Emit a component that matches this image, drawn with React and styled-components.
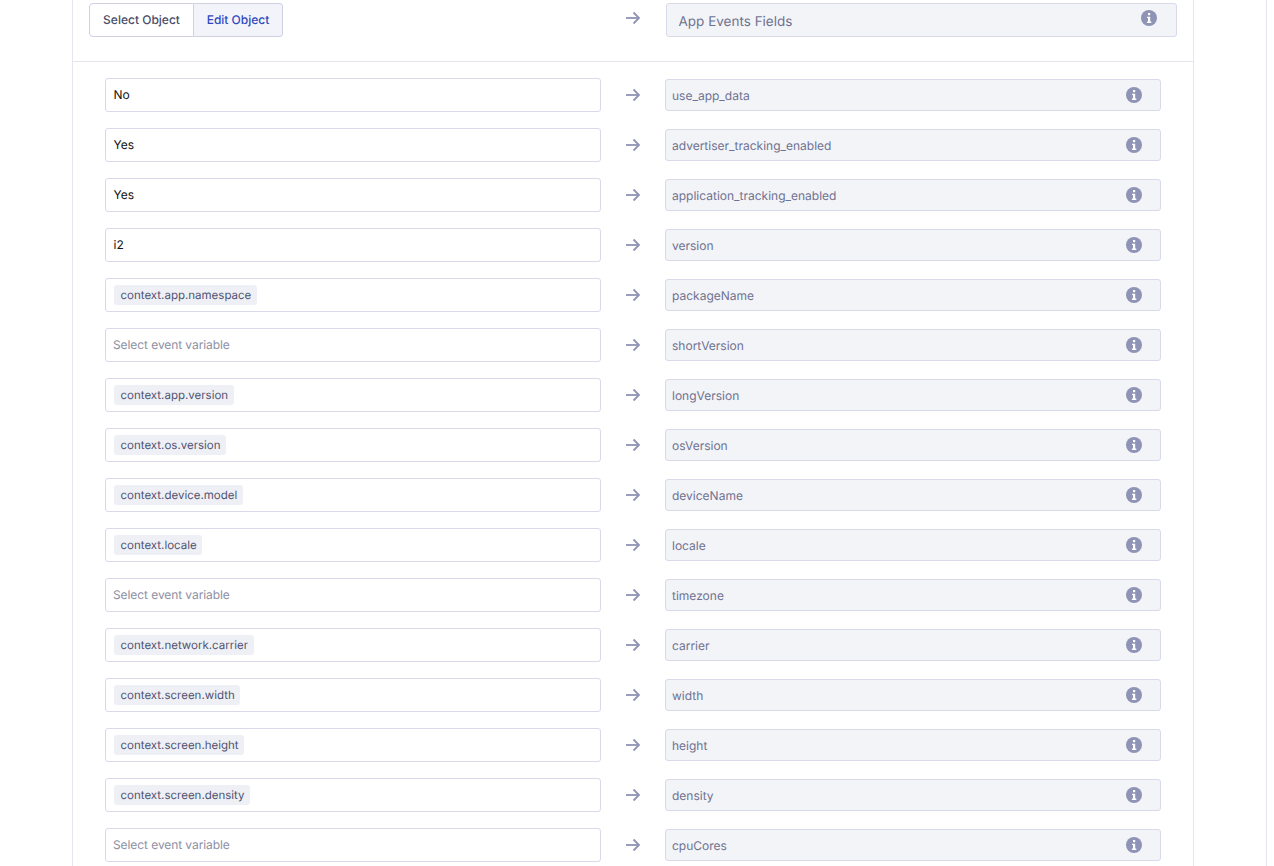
import React from "react";
import styled, { createGlobalStyle } from "styled-components";

const rows = [
  { text: "No", field: "use_app_data" },
  { text: "Yes", field: "advertiser_tracking_enabled" },
  { text: "Yes", field: "application_tracking_enabled" },
  { text: "i2", field: "version" },
  { tag: "context.app.namespace", field: "packageName" },
  { field: "shortVersion" },
  { tag: "context.app.version", field: "longVersion" },
  { tag: "context.os.version", field: "osVersion" },
  { tag: "context.device.model", field: "deviceName" },
  { tag: "context.locale", field: "locale" },
  { field: "timezone" },
  { tag: "context.network.carrier", field: "carrier" },
  { tag: "context.screen.width", field: "width" },
  { tag: "context.screen.height", field: "height" },
  { tag: "context.screen.density", field: "density" },
  { field: "cpuCores" },
];

const ArrowIcon = () => (
  <ArrowSvg viewBox="0 0 16 14" fill="none" stroke="#8f93b5" strokeWidth="1.8">
    <path d="M1 7h13" />
    <path d="M8.5 1.5L14 7l-5.500 5.500" />
  </ArrowSvg>
);

const InfoIcon = () => (
  <InfoSvg viewBox="0 0 16 16">
    <circle cx="8" cy="8" r="8" fill="#8f93b5" />
    <rect x="7" y="3" width="2.2" height="2.200" fill="#fff" />
    <path d="M6 6.700h3.200v4.900H10.300v1.300H5.900v-1.300H7V8H6z" fill="#fff" />
  </InfoSvg>
);

export default function App() {
  return (
    <>
      <GlobalStyle />
      <Page>
        <Card>
          <TopRow>
            <ButtonGroup>
              <ToggleButton>Select Object</ToggleButton>
              <ToggleButton $active>Edit Object</ToggleButton>
            </ButtonGroup>
            <ArrowCell $top>
              <ArrowIcon />
            </ArrowCell>
            <HeaderField>
              App Events Fields
              <InfoIcon />
            </HeaderField>
          </TopRow>
          <Rows>
            {rows.map((row) => (
              <Row key={row.field}>
                <Input>
                  {row.tag && <Tag>{row.tag}</Tag>}
                  {row.text && <Value>{row.text}</Value>}
                  {!row.tag && !row.text && (
                    <Placeholder>Select event variable</Placeholder>
                  )}
                </Input>
                <ArrowCell>
                  <ArrowIcon />
                </ArrowCell>
                <Field>
                  {row.field}
                  <InfoIcon />
                </Field>
              </Row>
            ))}
          </Rows>
        </Card>
      </Page>
    </>
  );
}

/*===================== Styles =====================*/
const GlobalStyle = createGlobalStyle`
  html, body {
    margin: 0;
    padding: 0;
    height: 866px;
    overflow: hidden;
    background: #fff;
    font-family: Inter, "Noto Sans", sans-serif;
    text-rendering: geometricPrecision;
  }
`;

const Page = styled.div`
  box-sizing: border-box;
  width: 1267px;
  height: 866px;
  padding-left: 72px;
  border-right: 1px solid #e6e6f0;
  overflow: hidden;
`;

const Card = styled.div`
  box-sizing: border-box;
  width: 1122px;
  min-height: 866px;
  border-left: 1px solid #e6e6f0;
  border-right: 1px solid #e6e6f0;
`;

const TopRow = styled.div`
  box-sizing: border-box;
  display: flex;
  align-items: flex-start;
  height: 62px;
  padding: 3px 15px 0 16px;
  border-bottom: 1px solid #e6e6f0;
`;

const ButtonGroup = styled.div`
  display: flex;
  width: 512px;
`;

const ToggleButton = styled.div`
  box-sizing: border-box;
  display: flex;
  align-items: center;
  justify-content: center;
  height: 34px;
  padding-bottom: 1px;
  font-size: 12px;
  font-weight: 500;
  color: ${(p) => (p.$active ? "#2f4ac0" : "#4a4d68")};
  background: ${(p) => (p.$active ? "#f3f4f9" : "#fff")};
  width: ${(p) => (p.$active ? "89px" : "105px")};
  border: 1px solid #cfd1e3;
  border-left-width: ${(p) => (p.$active ? "0" : "1px")};
  border-radius: ${(p) => (p.$active ? "0 4px 4px 0" : "4px 0 0 4px")};
`;

const ArrowCell = styled.div`
  display: flex;
  align-items: center;
  justify-content: center;
  flex: none;
  width: 64px;
  height: 34px;
  padding-bottom: ${(p) => (p.$top ? "4px" : "0")};
  box-sizing: border-box;
`;

const ArrowSvg = styled.svg`
  width: 16px;
  height: 14px;
`;

const InfoSvg = styled.svg`
  flex: none;
  width: 16px;
  height: 16px;
`;

const HeaderField = styled.div`
  box-sizing: border-box;
  display: flex;
  align-items: center;
  justify-content: space-between;
  width: 511px;
  height: 34px;
  margin-left: 1px;
  padding: 4px 19px 0 11.500px;
  font-size: 13.500px;
  color: #6f7290;
  background: #f3f4f8;
  border: 1px solid #d9dae9;
  border-radius: 3px;

  ${InfoSvg} {
    margin-top: -8px;
  }
`;

const Rows = styled.div`
  display: flex;
  flex-direction: column;
  gap: 16px;
  padding: 16px 0 0 32px;
`;

const Row = styled.div`
  display: flex;
  align-items: center;
`;

const Input = styled.div`
  box-sizing: border-box;
  display: flex;
  align-items: center;
  width: 496px;
  height: 34px;
  padding: 0 8px 1px 7px;
  background: #fff;
  border: 1px solid #d9dae9;
  border-radius: 3px;
`;

const Value = styled.span`
  margin-left: 0.500px;
  font-size: 12px;
  color: #111;
`;

const Placeholder = styled.span`
  font-size: 12px;
  letter-spacing: -0.08px;
  color: #8e90a3;
`;

const Tag = styled.span`
  margin: 1px 0 0 1px;
  padding: 3px 5.500px 3px 6.500px;
  font-size: 11.500px;
  line-height: 14px;
  color: #4f5272;
  background: #eff0f5;
  border-radius: 3px;
`;

const Field = styled.div`
  box-sizing: border-box;
  display: flex;
  align-items: center;
  justify-content: space-between;
  width: 496px;
  height: 32px;
  padding: 0 18px 0 6px;
  font-size: 12px;
  color: #6f7290;
  background: #f3f4f8;
  border: 1px solid #d9dae9;
  border-radius: 3px;
`;
